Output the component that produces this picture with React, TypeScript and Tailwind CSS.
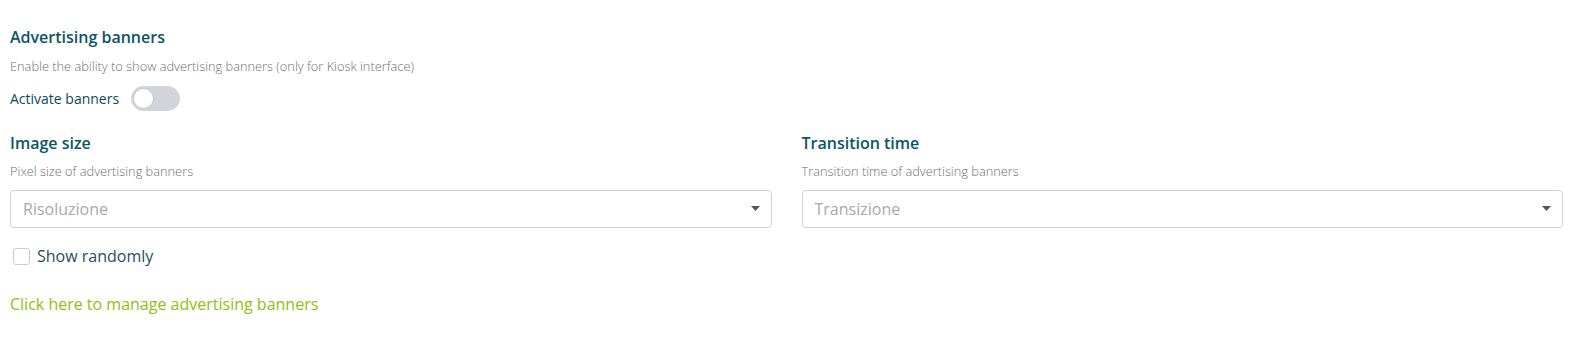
import React from "react";

function Caret() {
  return (
    <svg width="9" height="5" viewBox="0 0 9 5" className="shrink-0">
      <path d="M0 0 L9 0 L4.5 5 Z" fill="#555" />
    </svg>
  );
}

function Field({ title, desc, placeholder }: { title: string; desc: string; placeholder: string }) {
  return (
    <div className="flex flex-col">
      <h3 className="text-[16px] leading-[22px] font-semibold text-[#0b5567]">{title}</h3>
      <p className="mt-[9.5px] text-[12.8px] leading-[17px] font-light text-[#6f6f6f]">{desc}</p>
      <div className="mt-[9.5px] flex h-[38px] items-center justify-between rounded-[4px] border border-[#cfd3d8] bg-white pl-[12px] pr-[11px]">
        <span className="text-[16px] text-[#a9a9a9]">{placeholder}</span>
        <Caret />
      </div>
    </div>
  );
}

export default function App() {
  return (
    <div
      className="w-[1569px] h-[339px] bg-white pl-[10px] pr-[6px] pt-[26px]"
      style={{ fontFamily: '"Open Sans", "Noto Sans", sans-serif' }}
    >
      <h2 className="text-[16px] leading-[22px] font-semibold text-[#0b5567]">Advertising banners</h2>
      <p className="mt-[10px] text-[12.8px] leading-[17px] font-light text-[#6f6f6f]">
        Enable the ability to show advertising banners (only for Kiosk interface)
      </p>
      <div className="mt-[10.5px] flex items-center gap-[12px]">
        <span className="text-[14px] text-[#0b4a5c]">Activate banners</span>
        <div className="flex h-[25px] w-[49px] items-center rounded-full bg-[#d1d5da] px-[2px]">
          <div className="h-[21px] w-[21px] rounded-full border border-[#c3c7cc] bg-white" />
        </div>
      </div>
      <div className="mt-[21px] grid grid-cols-2 gap-[30px]">
        <Field title="Image size" desc="Pixel size of advertising banners" placeholder="Risoluzione" />
        <Field title="Transition time" desc="Transition time of advertising banners" placeholder="Transizione" />
      </div>
      <label className="mt-[17.5px] flex h-[22px] items-center gap-[7px] pl-[3px]">
        <span className="h-[17px] w-[17px] rounded-[3px] border border-[#c9cdd2] bg-white" />
        <span className="text-[16px] leading-[22px] text-[#1f4e5c]">Show randomly</span>
      </label>
      <a className="mt-[25.5px] block text-[16px] leading-[22px] text-[#8cc10f]">
        Click here to manage advertising banners
      </a>
    </div>
  );
}
